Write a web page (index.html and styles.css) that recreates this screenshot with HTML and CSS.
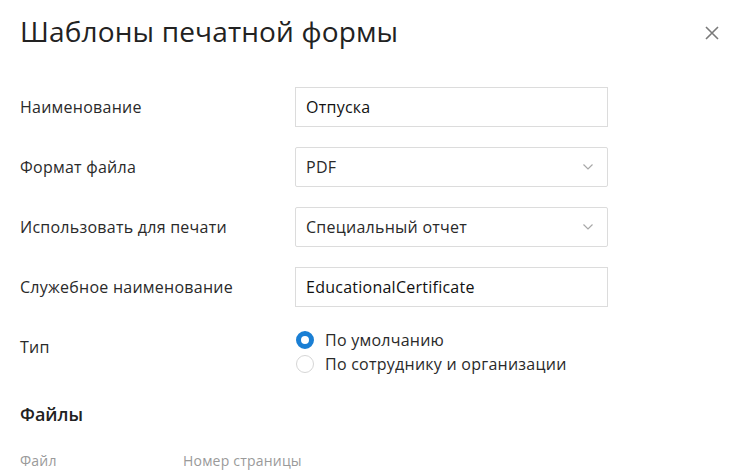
FILE: index.html
```html
<!DOCTYPE html>
<html lang="ru">
<head>
<meta charset="utf-8">
<link rel="stylesheet" href="styles.css">
</head>
<body>
<div class="dialog">
  <header class="head">
    <h1 class="title">Шаблоны печатной формы</h1>
    <button class="close" aria-label="Закрыть">
      <svg width="14" height="14" viewBox="0 0 14 14"><path d="M1 1L13 13M13 1L1 13" stroke="#7a7a7a" stroke-width="1.6" fill="none"/></svg>
    </button>
  </header>
  <form class="form">
    <div class="row">
      <label class="label">Наименование</label>
      <div class="field input">Отпуска</div>
    </div>
    <div class="row">
      <label class="label">Формат файла</label>
      <div class="field select"><span>PDF</span>
        <svg class="chev" width="10" height="6" viewBox="0 0 10 6"><path d="M0.5 0.5L5 5L9.5 0.5" stroke="#a8a8a8" stroke-width="1.2" fill="none"/></svg>
      </div>
    </div>
    <div class="row">
      <label class="label">Использовать для печати</label>
      <div class="field select"><span>Специальный отчет</span>
        <svg class="chev" width="10" height="6" viewBox="0 0 10 6"><path d="M0.5 0.5L5 5L9.5 0.5" stroke="#a8a8a8" stroke-width="1.2" fill="none"/></svg>
      </div>
    </div>
    <div class="row">
      <label class="label">Служебное наименование</label>
      <div class="field input">EducationalCertificate</div>
    </div>
    <div class="row row-radio">
      <label class="label">Тип</label>
      <div class="radios">
        <div class="radio"><span class="dot checked"></span>По умолчанию</div>
        <div class="radio"><span class="dot"></span>По сотруднику и организации</div>
      </div>
    </div>
  </form>
  <h2 class="section">Файлы</h2>
  <div class="thead">
    <span class="col-file">Файл</span>
    <span class="col-page">Номер страницы</span>
  </div>
</div>
</body>
</html>
```
FILE: styles.css
```css
html, body {
  margin: 0;
  padding: 0;
  background: #fff;
}
body {
  font-family: "Open Sans", "Noto Sans", sans-serif;
  color: #222;
  overflow: hidden;
}
.dialog {
  padding: 0 20px 0 20px;
  width: 741px;
  box-sizing: border-box;
}
.head {
  display: flex;
  justify-content: space-between;
  align-items: center;
  height: 66px;
}
.title {
  margin: 0 0 4px 0;
  font-weight: 400;
  font-size: 28px;
  color: #222;
  letter-spacing: 0.15px;
}
.close {
  border: 0;
  background: none;
  padding: 0;
  width: 14px;
  height: 14px;
  margin-right: 2px;
  display: flex;
}
.form {
  margin-top: 21px;
  display: flex;
  flex-direction: column;
  gap: 20px;
}
.row {
  display: flex;
  align-items: center;
  height: 40px;
}
.label {
  width: 275px;
  font-size: 16px;
  letter-spacing: 0.25px;
  color: #2a2a2a;
}
.field {
  width: 313px;
  height: 40px;
  box-sizing: border-box;
  border: 1px solid #dcdcdc;
  padding: 0 10px;
  display: flex;
  align-items: center;
  font-size: 16px;
  letter-spacing: 0.25px;
  color: #111;
}
.select {
  border-radius: 2px;
  justify-content: space-between;
  color: #2a2a2a;
  padding-right: 14px;
}
.row-radio {
  height: auto;
  align-items: flex-start;
  margin-top: 2px;
}
.row-radio .label {
  padding-top: 7px;
}
.radios {
  display: flex;
  flex-direction: column;
  gap: 2px;
}
.radio {
  display: flex;
  align-items: center;
  gap: 11px;
  font-size: 16px;
  letter-spacing: 0.25px;
  color: #2a2a2a;
  height: 22px;
}
.dot {
  width: 18px;
  height: 18px;
  box-sizing: border-box;
  border-radius: 50%;
  border: 1px solid #d6d6d6;
  background: #fff;
  margin-left: 1px;
}
.dot.checked {
  border: 5px solid #1a7fd4;
}
.section {
  margin: 27px 0 0 0;
  font-size: 18px;
  font-weight: 600;
  color: #222;
}
.thead {
  margin-top: 25px;
  display: flex;
  font-size: 14px;
  letter-spacing: 0.2px;
  color: #9a9a9a;
}
.col-file {
  width: 163px;
}
```
